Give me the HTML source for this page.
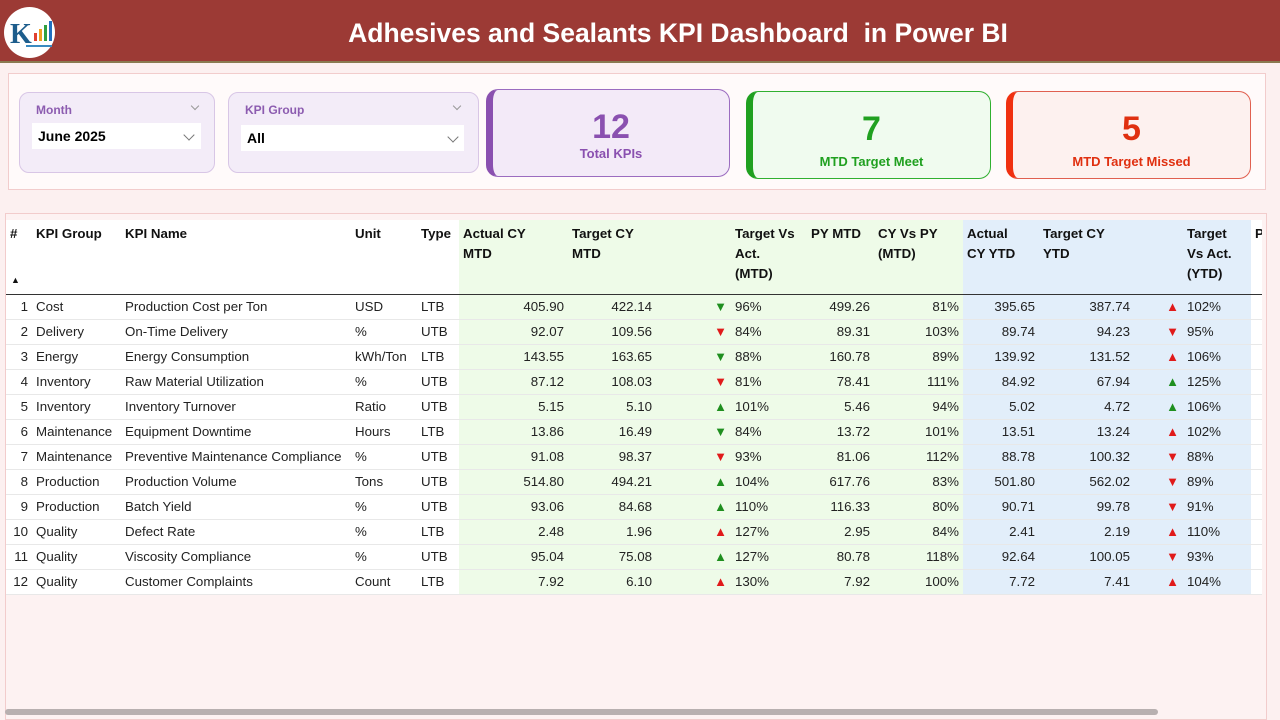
<!DOCTYPE html>
<html><head><meta charset="utf-8">
<style>
*{margin:0;padding:0;box-sizing:border-box}
body{width:1280px;height:720px;background:#fcf0f0;font-family:"Liberation Sans",sans-serif;position:relative;overflow:hidden}
.hdr{position:absolute;left:0;top:0;width:1280px;height:63px;background:#9c3a35;border-bottom:2px solid #8a7a50}
.hdr h1{position:absolute;left:0;width:1356px;text-align:center;top:18px;color:#fff;font-size:26.5px;font-weight:bold}
.logo{position:absolute;left:4px;top:7px;width:51px;height:51px;border-radius:50%;background:#fff}
.top{position:absolute;left:8px;top:73px;width:1258px;height:117px;background:#fffafa;border:1px solid #f2cccc}
.slc{position:absolute;background:#f3ecf8;border:1px solid #d8c6e6;border-radius:10px}
.slc .l{position:absolute;left:16px;top:10px;color:#8c5cb0;font-size:12px;font-weight:bold}
.slc .v{position:absolute;left:12px;top:30px;height:26px;background:#fff;font-size:14px;font-weight:bold;padding:5px 6px}
.chev{position:absolute;width:8px;height:8px;border-right:1.5px solid #777;border-bottom:1.5px solid #777;transform:rotate(45deg)}
.card{position:absolute;border-radius:12px;text-align:center}
.card .n{font-size:34px;font-weight:bold;margin-top:18px;line-height:38px}
.card .t{font-size:13px;font-weight:bold}
.tbl{position:absolute;left:5px;top:213px;width:1262px;height:507px;background:#fdf2f2;border:1px solid #f2cccc;overflow:hidden}
table{position:absolute;left:0;top:6px;width:1256px;border-collapse:collapse;table-layout:fixed;font-size:13.3px;color:#222;background:#fff}
th{font-weight:bold;text-align:left;vertical-align:top;height:74px;padding:4px 4px;line-height:20px;color:#111;border-bottom:1px solid #333;overflow:hidden;white-space:nowrap}
td{height:25px;padding:0 4px;white-space:nowrap;border-bottom:1px solid #e8e8e8;overflow:hidden}
.g{background:#eefbe8}.b{background:#e2eefa}
.r{text-align:right}
.up{color:#1f8f1f}.dn{color:#e01a1a}
.ar{text-align:right;font-size:13px;padding-right:4px}
.sb{position:absolute;left:5px;top:709px;width:1153px;height:6px;border-radius:3px;background:#b8b0b0}
</style></head><body>
<div class="hdr">
<div class="logo"><svg width="51" height="51" viewBox="0 0 51 51"><text x="6" y="36" font-size="28" font-weight="bold" fill="#1d5d8c" font-family="Liberation Serif">K</text><rect x="30" y="26" width="3" height="8" fill="#e04030"/><rect x="35" y="22" width="3" height="12" fill="#f0a020"/><rect x="40" y="18" width="3" height="16" fill="#30a040"/><rect x="45" y="14" width="3" height="20" fill="#2070c0"/><rect x="22" y="38" width="26" height="2" fill="#3a8ac0"/></svg></div>
<h1>Adhesives and Sealants KPI Dashboard&nbsp; in Power BI</h1>
</div>
<div class="top"></div>
<div class="slc" style="left:19px;top:92px;width:196px;height:81px"><div class="l">Month</div><div class="chev" style="left:172px;top:10px;width:6px;height:6px;border-color:#999"></div><div class="v" style="width:169px">June 2025</div><div class="chev" style="left:165px;top:38px"></div></div>
<div class="slc" style="left:228px;top:92px;width:251px;height:81px"><div class="l">KPI Group</div><div class="chev" style="left:225px;top:10px;width:6px;height:6px;border-color:#999"></div><div class="v" style="width:223px;top:32px">All</div><div class="chev" style="left:220px;top:40px"></div></div>
<div class="card" style="left:486px;top:89px;width:244px;height:88px;background:#f3eaf8;border:1px solid #9b6cc0;border-left:7px solid #8a50b0"><div class="n" style="color:#8a50b0">12</div><div class="t" style="color:#8a50b0">Total KPIs</div></div>
<div class="card" style="left:746px;top:91px;width:245px;height:88px;background:#f0fbef;border:1px solid #30b030;border-left:7px solid #20a020"><div class="n" style="color:#20a020">7</div><div class="t" style="color:#20a020;margin-top:6px">MTD Target Meet</div></div>
<div class="card" style="left:1006px;top:91px;width:245px;height:88px;background:#fdf1ef;border:1px solid #e06050;border-left:7px solid #f03010"><div class="n" style="color:#e03010">5</div><div class="t" style="color:#e03010;margin-top:6px">MTD Target Missed</div></div>
<div class="tbl">
<table>
<colgroup><col style="width:26px"><col style="width:89px"><col style="width:230px"><col style="width:66px"><col style="width:42px"><col style="width:109px"><col style="width:88px"><col style="width:75px"><col style="width:76px"><col style="width:67px"><col style="width:89px"><col style="width:76px"><col style="width:95px"><col style="width:49px"><col style="width:68px"><col style="width:11px"></colgroup>
<tr><th style="position:relative">#<span style="position:absolute;left:5px;bottom:4px;font-size:9px">▲</span></th><th>KPI Group</th><th>KPI Name</th><th>Unit</th><th>Type</th><th class="g">Actual CY<br>MTD</th><th class="g">Target CY<br>MTD</th><th class="g"></th><th class="g">Target Vs<br>Act.<br>(MTD)</th><th class="g">PY MTD</th><th class="g">CY Vs PY<br>(MTD)</th><th class="b">Actual<br>CY YTD</th><th class="b">Target CY<br>YTD</th><th class="b"></th><th class="b">Target<br>Vs Act.<br>(YTD)</th><th>P</th></tr>
<tr><td class="r">1</td><td>Cost</td><td>Production Cost per Ton</td><td>USD</td><td>LTB</td><td class="g r">405.90</td><td class="g r">422.14</td><td class="g ar up">▼</td><td class="g">96%</td><td class="g r">499.26</td><td class="g r">81%</td><td class="b r">395.65</td><td class="b r">387.74</td><td class="b ar dn">▲</td><td class="b">102%</td><td></td></tr>
<tr><td class="r">2</td><td>Delivery</td><td>On-Time Delivery</td><td>%</td><td>UTB</td><td class="g r">92.07</td><td class="g r">109.56</td><td class="g ar dn">▼</td><td class="g">84%</td><td class="g r">89.31</td><td class="g r">103%</td><td class="b r">89.74</td><td class="b r">94.23</td><td class="b ar dn">▼</td><td class="b">95%</td><td></td></tr>
<tr><td class="r">3</td><td>Energy</td><td>Energy Consumption</td><td>kWh/Ton</td><td>LTB</td><td class="g r">143.55</td><td class="g r">163.65</td><td class="g ar up">▼</td><td class="g">88%</td><td class="g r">160.78</td><td class="g r">89%</td><td class="b r">139.92</td><td class="b r">131.52</td><td class="b ar dn">▲</td><td class="b">106%</td><td></td></tr>
<tr><td class="r">4</td><td>Inventory</td><td>Raw Material Utilization</td><td>%</td><td>UTB</td><td class="g r">87.12</td><td class="g r">108.03</td><td class="g ar dn">▼</td><td class="g">81%</td><td class="g r">78.41</td><td class="g r">111%</td><td class="b r">84.92</td><td class="b r">67.94</td><td class="b ar up">▲</td><td class="b">125%</td><td></td></tr>
<tr><td class="r">5</td><td>Inventory</td><td>Inventory Turnover</td><td>Ratio</td><td>UTB</td><td class="g r">5.15</td><td class="g r">5.10</td><td class="g ar up">▲</td><td class="g">101%</td><td class="g r">5.46</td><td class="g r">94%</td><td class="b r">5.02</td><td class="b r">4.72</td><td class="b ar up">▲</td><td class="b">106%</td><td></td></tr>
<tr><td class="r">6</td><td>Maintenance</td><td>Equipment Downtime</td><td>Hours</td><td>LTB</td><td class="g r">13.86</td><td class="g r">16.49</td><td class="g ar up">▼</td><td class="g">84%</td><td class="g r">13.72</td><td class="g r">101%</td><td class="b r">13.51</td><td class="b r">13.24</td><td class="b ar dn">▲</td><td class="b">102%</td><td></td></tr>
<tr><td class="r">7</td><td>Maintenance</td><td>Preventive Maintenance Compliance</td><td>%</td><td>UTB</td><td class="g r">91.08</td><td class="g r">98.37</td><td class="g ar dn">▼</td><td class="g">93%</td><td class="g r">81.06</td><td class="g r">112%</td><td class="b r">88.78</td><td class="b r">100.32</td><td class="b ar dn">▼</td><td class="b">88%</td><td></td></tr>
<tr><td class="r">8</td><td>Production</td><td>Production Volume</td><td>Tons</td><td>UTB</td><td class="g r">514.80</td><td class="g r">494.21</td><td class="g ar up">▲</td><td class="g">104%</td><td class="g r">617.76</td><td class="g r">83%</td><td class="b r">501.80</td><td class="b r">562.02</td><td class="b ar dn">▼</td><td class="b">89%</td><td></td></tr>
<tr><td class="r">9</td><td>Production</td><td>Batch Yield</td><td>%</td><td>UTB</td><td class="g r">93.06</td><td class="g r">84.68</td><td class="g ar up">▲</td><td class="g">110%</td><td class="g r">116.33</td><td class="g r">80%</td><td class="b r">90.71</td><td class="b r">99.78</td><td class="b ar dn">▼</td><td class="b">91%</td><td></td></tr>
<tr><td class="r">10</td><td>Quality</td><td>Defect Rate</td><td>%</td><td>LTB</td><td class="g r">2.48</td><td class="g r">1.96</td><td class="g ar dn">▲</td><td class="g">127%</td><td class="g r">2.95</td><td class="g r">84%</td><td class="b r">2.41</td><td class="b r">2.19</td><td class="b ar dn">▲</td><td class="b">110%</td><td></td></tr>
<tr><td class="r">11</td><td>Quality</td><td>Viscosity Compliance</td><td>%</td><td>UTB</td><td class="g r">95.04</td><td class="g r">75.08</td><td class="g ar up">▲</td><td class="g">127%</td><td class="g r">80.78</td><td class="g r">118%</td><td class="b r">92.64</td><td class="b r">100.05</td><td class="b ar dn">▼</td><td class="b">93%</td><td></td></tr>
<tr><td class="r">12</td><td>Quality</td><td>Customer Complaints</td><td>Count</td><td>LTB</td><td class="g r">7.92</td><td class="g r">6.10</td><td class="g ar dn">▲</td><td class="g">130%</td><td class="g r">7.92</td><td class="g r">100%</td><td class="b r">7.72</td><td class="b r">7.41</td><td class="b ar dn">▲</td><td class="b">104%</td><td></td></tr>
</table>
</div>
<div class="sb"></div>
</body></html>
